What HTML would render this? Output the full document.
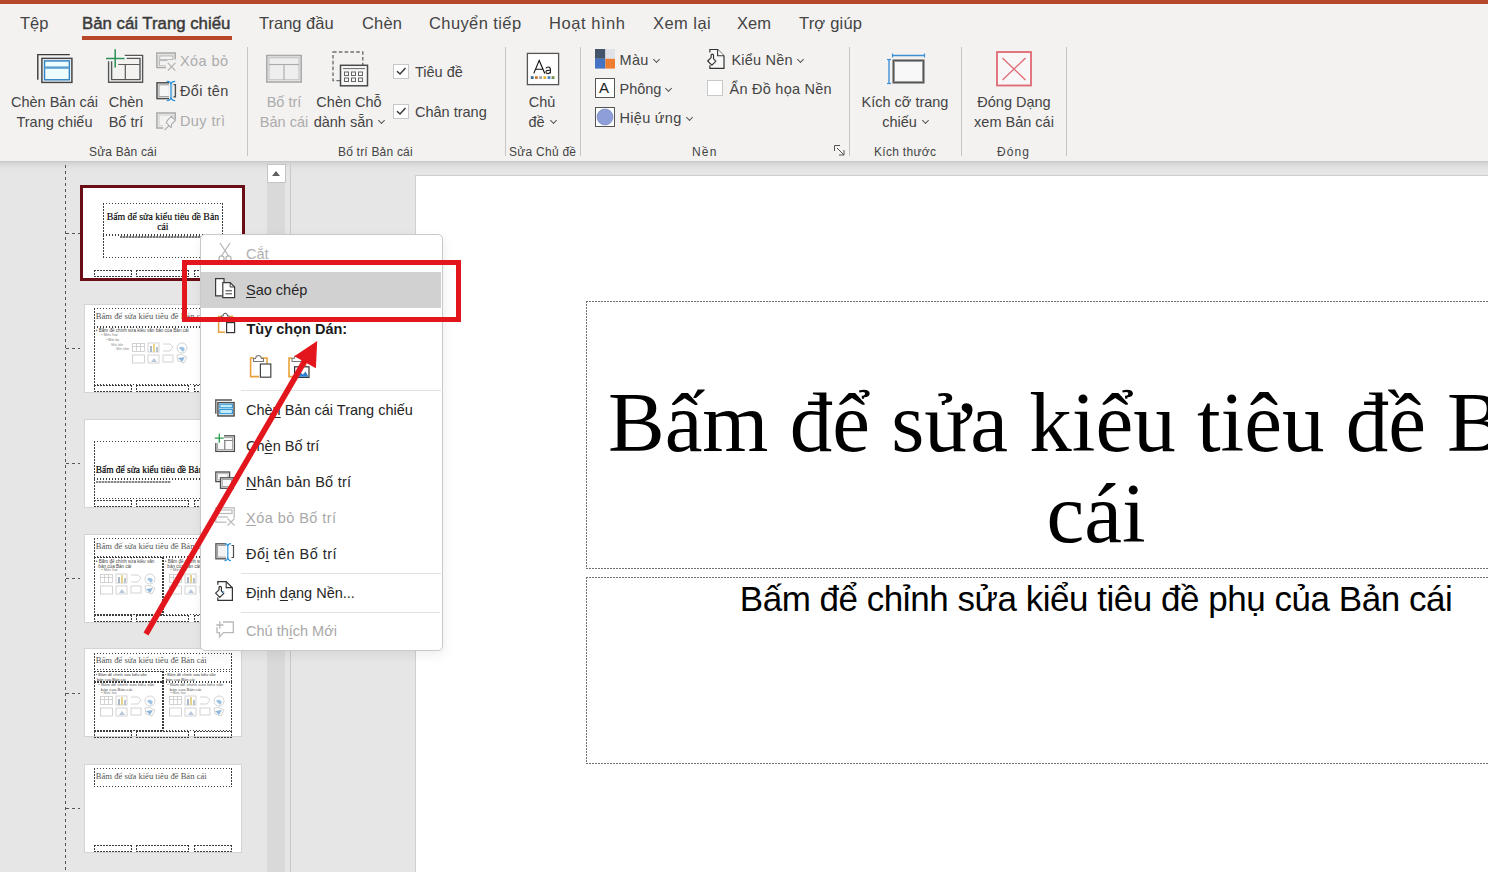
<!DOCTYPE html>
<html><head><meta charset="utf-8">
<style>
*{margin:0;padding:0;box-sizing:border-box}
html,body{width:1488px;height:872px;overflow:hidden;background:#e6e6e6;font-family:"Liberation Sans",sans-serif;color:#3b3a39}
.a{position:absolute}
.t{position:absolute;white-space:nowrap;line-height:1}
#topbar{left:0;top:0;width:1488px;height:4px;background:#b7472a}
#ribbon{left:0;top:4px;width:1488px;height:157px;background:#f3f2f1}
#rshadow{left:0;top:161px;width:1488px;height:12px;background:linear-gradient(#c4c4c4,#d6d6d6 2px,#e2e3e3 7px,#e6e6e6 12px)}
.tab{font-size:16.5px;color:#444;top:15px}
.sep{position:absolute;width:1px;background:#c8c6c4;top:47px;height:109px}
.lbl{font-size:14.5px;color:#444}
.dis{color:#acacac}
.glbl{font-size:12px;color:#444;top:146px;letter-spacing:0.15px}
.chev{display:inline-block;width:6px;height:6px;border-right:1.2px solid #555;border-bottom:1.2px solid #555;transform:rotate(45deg);}
</style></head>
<body>
<div id="topbar" class="a"></div>
<div id="ribbon" class="a"></div>
<div id="rshadow" class="a"></div>

<!-- tabs -->
<div class="t tab" style="left:20px">Tệp</div>
<div class="t tab" style="left:82px;top:16px;color:#3a3a3a;font-size:16.8px;-webkit-text-stroke:0.45px #3a3a3a">Bản cái Trang chiếu</div>
<div class="a" style="left:82px;top:36px;width:150px;height:4px;background:#b8472a"></div>
<div class="t tab" style="left:259px">Trang đầu</div>
<div class="t tab" style="left:362px;letter-spacing:0.15px">Chèn</div>
<div class="t tab" style="left:429px;letter-spacing:0.4px">Chuyển tiếp</div>
<div class="t tab" style="left:549px;letter-spacing:0.55px">Hoạt hình</div>
<div class="t tab" style="left:653px;letter-spacing:0.45px">Xem lại</div>
<div class="t tab" style="left:737px">Xem</div>
<div class="t tab" style="left:799px;letter-spacing:0.2px">Trợ giúp</div>

<!-- separators -->
<div class="sep" style="left:247px"></div>
<div class="sep" style="left:505px"></div>
<div class="sep" style="left:580px"></div>
<div class="sep" style="left:849px"></div>
<div class="sep" style="left:961px"></div>
<div class="sep" style="left:1066px"></div>

<!-- group labels -->
<div class="t glbl" style="left:89px">Sửa Bản cái</div>
<div class="t glbl" style="left:338px;letter-spacing:0.2px">Bố trí Bản cái</div>
<div class="t glbl" style="left:509px;letter-spacing:0.25px">Sửa Chủ đề</div>
<div class="t glbl" style="left:692px;letter-spacing:1.2px">Nền</div>
<div class="t glbl" style="left:874px;letter-spacing:0.3px">Kích thước</div>
<div class="t glbl" style="left:997px;letter-spacing:1.1px">Đóng</div>

<!-- ===== RIBBON CONTENT ===== -->
<!-- Group 1 -->
<svg class="a" style="left:30px;top:48px" width="50" height="40" viewBox="30 48 50 40">
  <path d="M37.8 79.8 V54.6 H69.8" fill="none" stroke="#3a3a3a" stroke-width="1.4"/>
  <rect x="41.9" y="58.4" width="30" height="24" fill="#fff" stroke="#444" stroke-width="1.5"/>
  <rect x="44.5" y="60.9" width="24.9" height="18.9" fill="#ecfcff" stroke="#3584c4" stroke-width="1.5"/>
  <rect x="44.5" y="66.4" width="24.9" height="2.4" fill="#5e9fd0"/>
</svg>
<div class="t lbl" style="left:0;width:109px;text-align:center;top:92.8px;line-height:19.8px">Chèn Bản cái<br>Trang chiếu</div>

<svg class="a" style="left:100px;top:45px" width="50" height="42" viewBox="100 45 50 42">
  <path d="M124.7 55.4 H142.6 V82.2 H108.6 V61.3 M111.6 61.3 V79.6 H140 V58.4 H126.6" fill="#fafafa" stroke="#555" stroke-width="1.4"/>
  <path d="M118.3 64.5 H140 M125.3 64.5 V79.6" fill="none" stroke="#5a5a5a" stroke-width="1.2"/>
  <path d="M106 58.4 H124.6 M115.2 49.2 V67.6" stroke="#2a9058" stroke-width="1.5"/>
</svg>
<div class="t lbl" style="left:96px;width:60px;text-align:center;top:92.8px;line-height:19.8px">Chèn<br>Bố trí</div>

<!-- small buttons -->
<svg class="a" style="left:154px;top:50px" width="24" height="84" viewBox="154 50 24 84">
  <!-- Xoa bo -->
  <path d="M175.2 59.6 V52.9 H156.9 V67.6 H166" fill="none" stroke="#a8a8a8" stroke-width="1.5"/>
  <path d="M173 59.6 V55 H159 V65.5 H166" fill="none" stroke="#cdcdcd" stroke-width="1"/>
  <rect x="159.8" y="56" width="13" height="3.4" fill="#f6f6f6" stroke="#b4b4b4" stroke-width="0.9"/>
  <path d="M159.5 60.6 H167.5 M159.5 60.6 V65.5" fill="none" stroke="#b4b4b4" stroke-width="0.9"/>
  <path d="M167.8 62.8 L175.4 70.6 M175.4 62.8 L167.8 70.6" stroke="#b0b0b0" stroke-width="1.2"/>
  <!-- Doi ten -->
  <rect x="157" y="82.8" width="14.4" height="15.8" fill="#f6f6f6" stroke="#4d4d4d" stroke-width="1.5"/>
  <rect x="159" y="84.8" width="10.4" height="11.8" fill="none" stroke="#9a9a9a" stroke-width="1"/>
  <rect x="169" y="81" width="3.5" height="20" fill="#f3f2f1"/>
  <path d="M173.6 84.6 H175.4 V96.8 H173.6" fill="none" stroke="#4d4d4d" stroke-width="1.4"/>
  <path d="M166.8 81.4 Q171 81.4 171 85 V96.8 Q171 100.6 166.8 100.6 M175.2 81.4 Q171 81.4 171 85 V96.8 Q171 100.6 175.2 100.6" fill="none" stroke="#2b93d6" stroke-width="1.3"/>
  <!-- Duy tri -->
  <path d="M175.2 119.6 V112.9 H156.9 V128 H163.3" fill="none" stroke="#a8a8a8" stroke-width="1.5"/>
  <path d="M173 117 V115 H159 V125.8 H163" fill="none" stroke="#cfcfcf" stroke-width="1.1"/>
  <path d="M164.5 130.2 L168.8 125.9 M166.2 122.6 L171.2 127.6 L171.6 124.2 L175.4 120.4 L171.4 116.4 L167.6 120.2 Z" fill="#f4f4f4" stroke="#ababab" stroke-width="1.1" stroke-linejoin="round"/>
</svg>
<div class="t lbl dis" style="left:180px;top:54.4px;letter-spacing:0.4px">Xóa bỏ</div>
<div class="t lbl" style="left:180px;top:84.3px;letter-spacing:0.4px">Đổi tên</div>
<div class="t lbl dis" style="left:180px;top:114.2px;letter-spacing:0.4px">Duy trì</div>

<!-- Group 2 -->
<svg class="a" style="left:262px;top:50px" width="44" height="36" viewBox="262 50 44 36">
  <rect x="266.8" y="55.5" width="34.4" height="26.5" fill="#eeeeee" stroke="#a9a9a9" stroke-width="1.6"/>
  <rect x="269" y="57.8" width="30" height="22" fill="none" stroke="#b8b8b8" stroke-width="0.9"/>
  <line x1="269" y1="64.5" x2="299" y2="64.5" stroke="#a9a9a9" stroke-width="1.1"/>
  <line x1="284" y1="64.5" x2="284" y2="80" stroke="#a9a9a9" stroke-width="1.1"/>
</svg>
<div class="t lbl dis" style="left:254px;width:60px;text-align:center;top:92.8px;line-height:19.8px">Bố trí<br>Bản cái</div>

<svg class="a" style="left:328px;top:48px" width="44" height="42" viewBox="328 48 44 42">
  <rect x="333" y="52" width="29.8" height="28.6" fill="none" stroke="#707070" stroke-width="1.4" stroke-dasharray="3.6 2.2"/>
  <rect x="340.5" y="65.3" width="27" height="20.5" fill="#f7f7f7" stroke="#4a4a4a" stroke-width="1.5"/>
  <line x1="343" y1="68.6" x2="365" y2="68.6" stroke="#666" stroke-width="1"/>
  <g fill="none" stroke="#666" stroke-width="1">
    <rect x="344.5" y="72" width="4" height="3.5"/><rect x="351.5" y="72" width="4" height="3.5"/><rect x="358.5" y="72" width="4" height="3.5"/>
    <rect x="344.5" y="78" width="4" height="3.5"/><rect x="351.5" y="78" width="4" height="3.5"/><rect x="358.5" y="78" width="4" height="3.5"/>
  </g>
</svg>
<div class="t lbl" style="left:313px;width:72px;text-align:center;top:92.8px;line-height:19.8px">Chèn Chỗ<br>dành sẵn <span class="chev" style="position:relative;top:-4px;left:0px;margin-left:2px;width:5px;height:5px"></span></div>

<div class="a" style="left:393px;top:63.5px;width:15.5px;height:15.5px;background:#fff;border:1px solid #c8c8c8"></div>
<svg class="a" style="left:393px;top:63px" width="16" height="16"><path d="M4 8.2 L7 11 L12.5 5" fill="none" stroke="#333" stroke-width="1.4"/></svg>
<div class="t lbl" style="left:415px;top:64.7px">Tiêu đề</div>
<div class="a" style="left:393px;top:103.5px;width:15.5px;height:15.5px;background:#fff;border:1px solid #c8c8c8"></div>
<svg class="a" style="left:393px;top:103px" width="16" height="16"><path d="M4 8.2 L7 11 L12.5 5" fill="none" stroke="#333" stroke-width="1.4"/></svg>
<div class="t lbl" style="left:415px;top:104.7px">Chân trang</div>

<!-- Group 3 -->
<svg class="a" style="left:526px;top:52px" width="34" height="34" viewBox="526 52 34 34">
  <rect x="527.4" y="53.4" width="31.2" height="31.2" fill="#fff" stroke="#555" stroke-width="1.3"/>
  <path d="M533.8 73.4 L539.2 60.4 L544.8 73.4 M535.6 69.2 H543" fill="none" stroke="#111" stroke-width="1.15"/>
  <path d="M550.4 73.4 V69.4 Q550.4 67 548.2 67 Q546.4 67 546 68.3 M550.4 70.3 Q546 70 545.9 72 Q546 73.6 547.8 73.6 Q549.8 73.6 550.4 71.6" fill="none" stroke="#111" stroke-width="1.05"/>
  <rect x="530.8" y="76.2" width="2.8" height="2.8" fill="#3a6c94"/>
  <rect x="535" y="76.2" width="2.8" height="2.8" fill="#c47a32"/>
  <rect x="539.2" y="76.2" width="2.8" height="2.8" fill="#a3a3a3"/>
  <rect x="543.4" y="76.2" width="2.8" height="2.8" fill="#e2b232"/>
  <rect x="547.6" y="76.2" width="2.8" height="2.8" fill="#4f82c8"/>
  <rect x="551.6" y="76.2" width="2.8" height="2.8" fill="#6f8f4f"/>
</svg>
<div class="t lbl" style="left:512px;width:60px;text-align:center;top:92.8px;line-height:19.8px">Chủ<br>đề <span class="chev" style="position:relative;top:-4px;left:0px;margin-left:2px;width:5px;height:5px"></span></div>

<!-- Group 4 -->
<svg class="a" style="left:594px;top:48px" width="24" height="80" viewBox="594 48 24 80">
  <rect x="595" y="49" width="10.4" height="9.8" fill="#44546a"/>
  <rect x="605.4" y="49" width="9.6" height="9.8" fill="#dfe3e8"/>
  <rect x="595" y="58.8" width="10.4" height="9.8" fill="#4472c4"/>
  <rect x="605.4" y="58.8" width="9.6" height="9.8" fill="#ed7d31"/>
  <rect x="595.5" y="78.5" width="19" height="19" fill="#fff" stroke="#555" stroke-width="1"/>
  <rect x="595.5" y="107.5" width="19" height="19" fill="#fff" stroke="#555" stroke-width="1"/>
  <circle cx="605" cy="117" r="8" fill="#8e9fd8" stroke="#6f80c0" stroke-width="0.6"/>
</svg>
<div class="t" style="left:599px;top:80px;font-size:15px;color:#222">A</div>
<div class="t lbl" style="left:619.5px;top:52.7px;letter-spacing:0.3px">Màu <span class="chev" style="position:relative;top:-3px;left:1px;width:5px;height:5px"></span></div>
<div class="t lbl" style="left:619.5px;top:82.3px">Phông <span class="chev" style="position:relative;top:-3px;left:1px;width:5px;height:5px"></span></div>
<div class="t lbl" style="left:619.5px;top:110.5px;letter-spacing:0.3px">Hiệu ứng <span class="chev" style="position:relative;top:-3px;left:1px;width:5px;height:5px"></span></div>

<svg class="a" style="left:704px;top:46px" width="24" height="26" viewBox="704 46 24 26">
  <path d="M709.9 52.6 V49.5 H717.6 L724 55.9 V68.4 H709.9 V65.2" fill="#f7f7f7" stroke="#333" stroke-width="1.2"/>
  <path d="M717.6 49.5 V55.7 H724" fill="#fff" stroke="#333" stroke-width="1.1"/>
  <path d="M711.1 55.2 Q711.1 54.2 712.3 54.2 Q713.5 54.2 713.5 55.2 V58.8 L715.9 61.2 L711.9 65.2 L707.7 61 L711.1 57.6 Z" fill="#fff" stroke="#333" stroke-width="1.2" stroke-linejoin="round"/>
  <path d="M715 58.5 V64" stroke="#9ab" stroke-width="0.8" opacity="0.6"/>
</svg>
<div class="t lbl" style="left:731.5px;top:52.7px;letter-spacing:0.2px">Kiểu Nền <span class="chev" style="position:relative;top:-3px;left:1px;width:5px;height:5px"></span></div>
<div class="a" style="left:707px;top:80px;width:16px;height:16px;background:#fff;border:1px solid #c8c8c8"></div>
<div class="t lbl" style="left:729.5px;top:82.3px;letter-spacing:0.25px">Ẩn Đồ họa Nền</div>
<svg class="a" style="left:834px;top:145px" width="12" height="12"><path d="M0.5 0.5 H6 M0.5 0.5 V6 M3 3 L10 10 M10 5 V10 H5" fill="none" stroke="#555" stroke-width="1"/></svg>

<!-- Group 5 -->
<svg class="a" style="left:884px;top:50px" width="46" height="38" viewBox="884 50 46 38">
  <line x1="889" y1="59" x2="889" y2="84" stroke="#3c8fd4" stroke-width="1.4"/>
  <line x1="887" y1="59.5" x2="891" y2="59.5" stroke="#3c8fd4" stroke-width="1.2"/>
  <line x1="887" y1="83.5" x2="891" y2="83.5" stroke="#3c8fd4" stroke-width="1.2"/>
  <line x1="892" y1="55.5" x2="925" y2="55.5" stroke="#3c8fd4" stroke-width="1.4"/>
  <line x1="892.5" y1="53.5" x2="892.5" y2="57.5" stroke="#3c8fd4" stroke-width="1.2"/>
  <line x1="924.5" y1="53.5" x2="924.5" y2="57.5" stroke="#3c8fd4" stroke-width="1.2"/>
  <rect x="892.5" y="59.5" width="32" height="24" fill="#555"/>
  <rect x="894.5" y="61.5" width="28" height="20" fill="#f8f8f8" stroke="#999" stroke-width="1"/>
</svg>
<div class="t lbl" style="left:855px;width:100px;text-align:center;top:92.8px;line-height:19.8px">Kích cỡ trang<br>chiếu <span class="chev" style="position:relative;top:-4px;left:0px;margin-left:2px;width:5px;height:5px"></span></div>

<!-- Group 6 -->
<svg class="a" style="left:994px;top:49px" width="40" height="40" viewBox="994 49 40 40">
  <rect x="997" y="52" width="34" height="33.5" fill="#f8f6f6" stroke="#e06a74" stroke-width="1.8"/>
  <path d="M1002.5 58 L1025.5 80 M1025.5 58 L1002.5 80" stroke="#e06a74" stroke-width="1.3"/>
</svg>
<div class="t lbl" style="left:964px;width:100px;text-align:center;top:92.8px;line-height:19.8px">Đóng Dạng<br>xem Bản cái</div>

<!-- left pane -->
<div class="a" style="left:65px;top:165px;width:1px;height:707px;background:repeating-linear-gradient(180deg,#555 0 3px,transparent 3px 6px)"></div>
<div class="a" style="left:66px;top:232.5px;width:14px;height:1px;background:repeating-linear-gradient(90deg,#555 0 3px,transparent 3px 6px)"></div>
<div class="a" style="left:80.2px;top:185.2px;width:164.7px;height:95.4px;border:3px solid #6b0d17;background:#fff"></div>
<div class="a" style="left:103.4px;top:203.3px;width:119.3px;height:31.5px;background:repeating-linear-gradient(90deg,#3c3c3c 0 1.8px,transparent 1.8px 3px) top/100% 1px no-repeat,repeating-linear-gradient(90deg,#3c3c3c 0 1.8px,transparent 1.8px 3px) bottom/100% 1px no-repeat,repeating-linear-gradient(180deg,#3c3c3c 0 1.8px,transparent 1.8px 3px) left/1px 100% no-repeat,repeating-linear-gradient(180deg,#3c3c3c 0 1.8px,transparent 1.8px 3px) right/1px 100% no-repeat;"></div>
<div class="a" style="left:103.4px;top:234.8px;width:119.3px;height:23.5px;background:repeating-linear-gradient(90deg,#3c3c3c 0 1.8px,transparent 1.8px 3px) top/100% 1px no-repeat,repeating-linear-gradient(90deg,#3c3c3c 0 1.8px,transparent 1.8px 3px) bottom/100% 1px no-repeat,repeating-linear-gradient(180deg,#3c3c3c 0 1.8px,transparent 1.8px 3px) left/1px 100% no-repeat,repeating-linear-gradient(180deg,#3c3c3c 0 1.8px,transparent 1.8px 3px) right/1px 100% no-repeat;"></div>
<div class="t" style="left:103.4px;top:211.5px;width:119px;text-align:center;font-family:'Liberation Serif',serif;font-size:9.8px;line-height:10.2px;color:#000;-webkit-text-stroke:0.15px #000;white-space:normal">Bấm để sửa kiểu tiêu đề Bản cái</div>
<div class="a" style="left:120px;top:236px;width:85px;height:2px;background:repeating-linear-gradient(90deg,#777 0 2px,#bbb 2px 3px)"></div>
<div class="a" style="left:94.3px;top:270px;width:37.5px;height:7px;background:repeating-linear-gradient(90deg,#3c3c3c 0 1.8px,transparent 1.8px 3px) top/100% 1px no-repeat,repeating-linear-gradient(90deg,#3c3c3c 0 1.8px,transparent 1.8px 3px) bottom/100% 1px no-repeat,repeating-linear-gradient(180deg,#3c3c3c 0 1.8px,transparent 1.8px 3px) left/1px 100% no-repeat,repeating-linear-gradient(180deg,#3c3c3c 0 1.8px,transparent 1.8px 3px) right/1px 100% no-repeat;"></div>
<div class="a" style="left:136.2px;top:270px;width:53px;height:7px;background:repeating-linear-gradient(90deg,#3c3c3c 0 1.8px,transparent 1.8px 3px) top/100% 1px no-repeat,repeating-linear-gradient(90deg,#3c3c3c 0 1.8px,transparent 1.8px 3px) bottom/100% 1px no-repeat,repeating-linear-gradient(180deg,#3c3c3c 0 1.8px,transparent 1.8px 3px) left/1px 100% no-repeat,repeating-linear-gradient(180deg,#3c3c3c 0 1.8px,transparent 1.8px 3px) right/1px 100% no-repeat;"></div>
<div class="a" style="left:194.2px;top:270px;width:37.5px;height:7px;background:repeating-linear-gradient(90deg,#3c3c3c 0 1.8px,transparent 1.8px 3px) top/100% 1px no-repeat,repeating-linear-gradient(90deg,#3c3c3c 0 1.8px,transparent 1.8px 3px) bottom/100% 1px no-repeat,repeating-linear-gradient(180deg,#3c3c3c 0 1.8px,transparent 1.8px 3px) left/1px 100% no-repeat,repeating-linear-gradient(180deg,#3c3c3c 0 1.8px,transparent 1.8px 3px) right/1px 100% no-repeat;"></div>
<div class="a" style="left:66px;top:348.0px;width:14px;height:1px;background:repeating-linear-gradient(90deg,#555 0 3px,transparent 3px 6px)"></div>
<div class="a" style="left:83.5px;top:303.5px;width:158px;height:89px;background:#fff;border:1px solid #d4d4d4"></div>
<div class="a" style="left:94.3px;top:308.0px;width:137.3px;height:19.2px;background:repeating-linear-gradient(90deg,#3c3c3c 0 1.8px,transparent 1.8px 3px) top/100% 1px no-repeat,repeating-linear-gradient(90deg,#3c3c3c 0 1.8px,transparent 1.8px 3px) bottom/100% 1px no-repeat,repeating-linear-gradient(180deg,#3c3c3c 0 1.8px,transparent 1.8px 3px) left/1px 100% no-repeat,repeating-linear-gradient(180deg,#3c3c3c 0 1.8px,transparent 1.8px 3px) right/1px 100% no-repeat;"></div>
<div class="a" style="left:94.3px;top:327.2px;width:137.3px;height:58px;background:repeating-linear-gradient(90deg,#3c3c3c 0 1.8px,transparent 1.8px 3px) top/100% 1px no-repeat,repeating-linear-gradient(90deg,#3c3c3c 0 1.8px,transparent 1.8px 3px) bottom/100% 1px no-repeat,repeating-linear-gradient(180deg,#3c3c3c 0 1.8px,transparent 1.8px 3px) left/1px 100% no-repeat,repeating-linear-gradient(180deg,#3c3c3c 0 1.8px,transparent 1.8px 3px) right/1px 100% no-repeat;"></div>
<div class="t" style="left:95.8px;top:312.0px;font-family:'Liberation Serif',serif;font-size:8.6px;color:#555">Bấm để sửa kiểu tiêu đề Bản cái</div>
<div class="t" style="left:95.8px;top:328.5px;font-size:4.6px;color:#444">• Bấm để chỉnh sửa kiểu văn bản của Bản cái</div>
<div class="t" style="left:101.3px;top:334.0px;font-size:3.8px;color:#777">• Mức hai</div>
<div class="t" style="left:106.3px;top:339.0px;font-size:3.2px;color:#777">• Mức ba</div>
<div class="t" style="left:111.3px;top:343.5px;font-size:3px;color:#888">Mức bốn</div>
<div class="t" style="left:116.3px;top:347.5px;font-size:3px;color:#888">Mức năm</div>
<svg class="a" style="left:132.3px;top:341.5px" width="56" height="22" viewBox="0 0 56 22"><g fill="none" stroke="#c9c9c9" stroke-width="0.8"><rect x="0.5" y="1.5" width="12" height="8"/><path d="M0.5 4.5H12.5M4.5 1.5V9.5M8.5 1.5V9.5"/><rect x="16" y="1" width="11" height="9"/><path d="M31 2 L38 2 L41 5 L38 9 L31 9"/><circle cx="50" cy="6" r="5"/><rect x="0.5" y="13" width="12" height="8"/><rect x="16" y="13" width="11" height="8"/><rect x="31" y="13" width="10" height="7"/><path d="M45 13 Q50 11 55 15 L52 21 L46 19 Z"/></g><rect x="18" y="4" width="2" height="6" fill="#aab8c8"/><rect x="21" y="2" width="2" height="8" fill="#e6d48a"/><rect x="24" y="5" width="2" height="5" fill="#b8c4d0"/><path d="M47 6 Q50 3 53 7 L51 10 Z" fill="#9cc2e4"/><path d="M46 16 L53 15 L50 20 Z" fill="#8fb8dc"/><path d="M19 20 L22 16 L25 20Z" fill="#b8c8dc"/></svg>
<div class="a" style="left:94.3px;top:385.2px;width:37.5px;height:7px;background:repeating-linear-gradient(90deg,#3c3c3c 0 1.8px,transparent 1.8px 3px) top/100% 1px no-repeat,repeating-linear-gradient(90deg,#3c3c3c 0 1.8px,transparent 1.8px 3px) bottom/100% 1px no-repeat,repeating-linear-gradient(180deg,#3c3c3c 0 1.8px,transparent 1.8px 3px) left/1px 100% no-repeat,repeating-linear-gradient(180deg,#3c3c3c 0 1.8px,transparent 1.8px 3px) right/1px 100% no-repeat;"></div>
<div class="a" style="left:136.2px;top:385.2px;width:53px;height:7px;background:repeating-linear-gradient(90deg,#3c3c3c 0 1.8px,transparent 1.8px 3px) top/100% 1px no-repeat,repeating-linear-gradient(90deg,#3c3c3c 0 1.8px,transparent 1.8px 3px) bottom/100% 1px no-repeat,repeating-linear-gradient(180deg,#3c3c3c 0 1.8px,transparent 1.8px 3px) left/1px 100% no-repeat,repeating-linear-gradient(180deg,#3c3c3c 0 1.8px,transparent 1.8px 3px) right/1px 100% no-repeat;"></div>
<div class="a" style="left:194.2px;top:385.2px;width:37.5px;height:7px;background:repeating-linear-gradient(90deg,#3c3c3c 0 1.8px,transparent 1.8px 3px) top/100% 1px no-repeat,repeating-linear-gradient(90deg,#3c3c3c 0 1.8px,transparent 1.8px 3px) bottom/100% 1px no-repeat,repeating-linear-gradient(180deg,#3c3c3c 0 1.8px,transparent 1.8px 3px) left/1px 100% no-repeat,repeating-linear-gradient(180deg,#3c3c3c 0 1.8px,transparent 1.8px 3px) right/1px 100% no-repeat;"></div>
<div class="a" style="left:66px;top:463.0px;width:14px;height:1px;background:repeating-linear-gradient(90deg,#555 0 3px,transparent 3px 6px)"></div>
<div class="a" style="left:83.5px;top:418.5px;width:158px;height:89px;background:#fff;border:1px solid #d4d4d4"></div>
<div class="a" style="left:94.3px;top:440.6px;width:137.3px;height:38.1px;background:repeating-linear-gradient(90deg,#3c3c3c 0 1.8px,transparent 1.8px 3px) top/100% 1px no-repeat,repeating-linear-gradient(90deg,#3c3c3c 0 1.8px,transparent 1.8px 3px) bottom/100% 1px no-repeat,repeating-linear-gradient(180deg,#3c3c3c 0 1.8px,transparent 1.8px 3px) left/1px 100% no-repeat,repeating-linear-gradient(180deg,#3c3c3c 0 1.8px,transparent 1.8px 3px) right/1px 100% no-repeat;"></div>
<div class="a" style="left:94.3px;top:478.7px;width:137.3px;height:20.8px;background:repeating-linear-gradient(90deg,#3c3c3c 0 1.8px,transparent 1.8px 3px) top/100% 1px no-repeat,repeating-linear-gradient(90deg,#3c3c3c 0 1.8px,transparent 1.8px 3px) bottom/100% 1px no-repeat,repeating-linear-gradient(180deg,#3c3c3c 0 1.8px,transparent 1.8px 3px) left/1px 100% no-repeat,repeating-linear-gradient(180deg,#3c3c3c 0 1.8px,transparent 1.8px 3px) right/1px 100% no-repeat;"></div>
<div class="t" style="left:95.8px;top:466.0px;font-family:'Liberation Serif',serif;font-size:9.4px;color:#000;-webkit-text-stroke:0.2px #000">Bấm để sửa kiểu tiêu đề Bản cái</div>
<div class="a" style="left:96.3px;top:480.5px;width:75px;height:2px;background:repeating-linear-gradient(90deg,#888 0 2px,#ccc 2px 3px)"></div>
<div class="a" style="left:94.3px;top:499.5px;width:37.5px;height:7px;background:repeating-linear-gradient(90deg,#3c3c3c 0 1.8px,transparent 1.8px 3px) top/100% 1px no-repeat,repeating-linear-gradient(90deg,#3c3c3c 0 1.8px,transparent 1.8px 3px) bottom/100% 1px no-repeat,repeating-linear-gradient(180deg,#3c3c3c 0 1.8px,transparent 1.8px 3px) left/1px 100% no-repeat,repeating-linear-gradient(180deg,#3c3c3c 0 1.8px,transparent 1.8px 3px) right/1px 100% no-repeat;"></div>
<div class="a" style="left:136.2px;top:499.5px;width:53px;height:7px;background:repeating-linear-gradient(90deg,#3c3c3c 0 1.8px,transparent 1.8px 3px) top/100% 1px no-repeat,repeating-linear-gradient(90deg,#3c3c3c 0 1.8px,transparent 1.8px 3px) bottom/100% 1px no-repeat,repeating-linear-gradient(180deg,#3c3c3c 0 1.8px,transparent 1.8px 3px) left/1px 100% no-repeat,repeating-linear-gradient(180deg,#3c3c3c 0 1.8px,transparent 1.8px 3px) right/1px 100% no-repeat;"></div>
<div class="a" style="left:194.2px;top:499.5px;width:37.5px;height:7px;background:repeating-linear-gradient(90deg,#3c3c3c 0 1.8px,transparent 1.8px 3px) top/100% 1px no-repeat,repeating-linear-gradient(90deg,#3c3c3c 0 1.8px,transparent 1.8px 3px) bottom/100% 1px no-repeat,repeating-linear-gradient(180deg,#3c3c3c 0 1.8px,transparent 1.8px 3px) left/1px 100% no-repeat,repeating-linear-gradient(180deg,#3c3c3c 0 1.8px,transparent 1.8px 3px) right/1px 100% no-repeat;"></div>
<div class="a" style="left:66px;top:578.1px;width:14px;height:1px;background:repeating-linear-gradient(90deg,#555 0 3px,transparent 3px 6px)"></div>
<div class="a" style="left:83.5px;top:533.6px;width:158px;height:89px;background:#fff;border:1px solid #d4d4d4"></div>
<div class="a" style="left:94.3px;top:538.1px;width:137.3px;height:19.2px;background:repeating-linear-gradient(90deg,#3c3c3c 0 1.8px,transparent 1.8px 3px) top/100% 1px no-repeat,repeating-linear-gradient(90deg,#3c3c3c 0 1.8px,transparent 1.8px 3px) bottom/100% 1px no-repeat,repeating-linear-gradient(180deg,#3c3c3c 0 1.8px,transparent 1.8px 3px) left/1px 100% no-repeat,repeating-linear-gradient(180deg,#3c3c3c 0 1.8px,transparent 1.8px 3px) right/1px 100% no-repeat;"></div>
<div class="a" style="left:94.3px;top:557.3000000000001px;width:69px;height:58px;background:repeating-linear-gradient(90deg,#3c3c3c 0 1.8px,transparent 1.8px 3px) top/100% 1px no-repeat,repeating-linear-gradient(90deg,#3c3c3c 0 1.8px,transparent 1.8px 3px) bottom/100% 1px no-repeat,repeating-linear-gradient(180deg,#3c3c3c 0 1.8px,transparent 1.8px 3px) left/1px 100% no-repeat,repeating-linear-gradient(180deg,#3c3c3c 0 1.8px,transparent 1.8px 3px) right/1px 100% no-repeat;"></div>
<div class="a" style="left:163.3px;top:557.3000000000001px;width:68.3px;height:58px;background:repeating-linear-gradient(90deg,#3c3c3c 0 1.8px,transparent 1.8px 3px) top/100% 1px no-repeat,repeating-linear-gradient(90deg,#3c3c3c 0 1.8px,transparent 1.8px 3px) bottom/100% 1px no-repeat,repeating-linear-gradient(180deg,#3c3c3c 0 1.8px,transparent 1.8px 3px) left/1px 100% no-repeat,repeating-linear-gradient(180deg,#3c3c3c 0 1.8px,transparent 1.8px 3px) right/1px 100% no-repeat;"></div>
<div class="t" style="left:95.8px;top:542.1px;font-family:'Liberation Serif',serif;font-size:8.6px;color:#555">Bấm để sửa kiểu tiêu đề Bản cái</div>
<div class="t" style="left:95.8px;top:558.6px;font-size:4.6px;line-height:5px;color:#444">• Bấm để chỉnh sửa kiểu văn<br>&nbsp; bản của Bản cái</div>
<div class="t" style="left:101.3px;top:568.6px;font-size:3.8px;color:#777">• Mức hai</div>
<svg class="a" style="left:100.3px;top:572.6px" width="56" height="22" viewBox="0 0 56 22"><g fill="none" stroke="#c9c9c9" stroke-width="0.8"><rect x="0.5" y="1.5" width="12" height="8"/><path d="M0.5 4.5H12.5M4.5 1.5V9.5M8.5 1.5V9.5"/><rect x="16" y="1" width="11" height="9"/><path d="M31 2 L38 2 L41 5 L38 9 L31 9"/><circle cx="50" cy="6" r="5"/><rect x="0.5" y="13" width="12" height="8"/><rect x="16" y="13" width="11" height="8"/><rect x="31" y="13" width="10" height="7"/><path d="M45 13 Q50 11 55 15 L52 21 L46 19 Z"/></g><rect x="18" y="4" width="2" height="6" fill="#aab8c8"/><rect x="21" y="2" width="2" height="8" fill="#e6d48a"/><rect x="24" y="5" width="2" height="5" fill="#b8c4d0"/><path d="M47 6 Q50 3 53 7 L51 10 Z" fill="#9cc2e4"/><path d="M46 16 L53 15 L50 20 Z" fill="#8fb8dc"/><path d="M19 20 L22 16 L25 20Z" fill="#b8c8dc"/></svg>
<div class="t" style="left:164.8px;top:558.6px;font-size:4.6px;line-height:5px;color:#444">• Bấm để chỉnh sửa kiểu văn<br>&nbsp; bản của Bản cái</div>
<div class="t" style="left:170.3px;top:568.6px;font-size:3.8px;color:#777">• Mức hai</div>
<svg class="a" style="left:169.3px;top:572.6px" width="56" height="22" viewBox="0 0 56 22"><g fill="none" stroke="#c9c9c9" stroke-width="0.8"><rect x="0.5" y="1.5" width="12" height="8"/><path d="M0.5 4.5H12.5M4.5 1.5V9.5M8.5 1.5V9.5"/><rect x="16" y="1" width="11" height="9"/><path d="M31 2 L38 2 L41 5 L38 9 L31 9"/><circle cx="50" cy="6" r="5"/><rect x="0.5" y="13" width="12" height="8"/><rect x="16" y="13" width="11" height="8"/><rect x="31" y="13" width="10" height="7"/><path d="M45 13 Q50 11 55 15 L52 21 L46 19 Z"/></g><rect x="18" y="4" width="2" height="6" fill="#aab8c8"/><rect x="21" y="2" width="2" height="8" fill="#e6d48a"/><rect x="24" y="5" width="2" height="5" fill="#b8c4d0"/><path d="M47 6 Q50 3 53 7 L51 10 Z" fill="#9cc2e4"/><path d="M46 16 L53 15 L50 20 Z" fill="#8fb8dc"/><path d="M19 20 L22 16 L25 20Z" fill="#b8c8dc"/></svg>
<div class="a" style="left:94.3px;top:615.3000000000001px;width:37.5px;height:7px;background:repeating-linear-gradient(90deg,#3c3c3c 0 1.8px,transparent 1.8px 3px) top/100% 1px no-repeat,repeating-linear-gradient(90deg,#3c3c3c 0 1.8px,transparent 1.8px 3px) bottom/100% 1px no-repeat,repeating-linear-gradient(180deg,#3c3c3c 0 1.8px,transparent 1.8px 3px) left/1px 100% no-repeat,repeating-linear-gradient(180deg,#3c3c3c 0 1.8px,transparent 1.8px 3px) right/1px 100% no-repeat;"></div>
<div class="a" style="left:136.2px;top:615.3000000000001px;width:53px;height:7px;background:repeating-linear-gradient(90deg,#3c3c3c 0 1.8px,transparent 1.8px 3px) top/100% 1px no-repeat,repeating-linear-gradient(90deg,#3c3c3c 0 1.8px,transparent 1.8px 3px) bottom/100% 1px no-repeat,repeating-linear-gradient(180deg,#3c3c3c 0 1.8px,transparent 1.8px 3px) left/1px 100% no-repeat,repeating-linear-gradient(180deg,#3c3c3c 0 1.8px,transparent 1.8px 3px) right/1px 100% no-repeat;"></div>
<div class="a" style="left:194.2px;top:615.3000000000001px;width:37.5px;height:7px;background:repeating-linear-gradient(90deg,#3c3c3c 0 1.8px,transparent 1.8px 3px) top/100% 1px no-repeat,repeating-linear-gradient(90deg,#3c3c3c 0 1.8px,transparent 1.8px 3px) bottom/100% 1px no-repeat,repeating-linear-gradient(180deg,#3c3c3c 0 1.8px,transparent 1.8px 3px) left/1px 100% no-repeat,repeating-linear-gradient(180deg,#3c3c3c 0 1.8px,transparent 1.8px 3px) right/1px 100% no-repeat;"></div>
<div class="a" style="left:66px;top:692.9px;width:14px;height:1px;background:repeating-linear-gradient(90deg,#555 0 3px,transparent 3px 6px)"></div>
<div class="a" style="left:83.5px;top:648.4px;width:158px;height:89px;background:#fff;border:1px solid #d4d4d4"></div>
<div class="a" style="left:94.3px;top:653.3px;width:137.3px;height:17.2px;background:repeating-linear-gradient(90deg,#3c3c3c 0 1.8px,transparent 1.8px 3px) top/100% 1px no-repeat,repeating-linear-gradient(90deg,#3c3c3c 0 1.8px,transparent 1.8px 3px) bottom/100% 1px no-repeat,repeating-linear-gradient(180deg,#3c3c3c 0 1.8px,transparent 1.8px 3px) left/1px 100% no-repeat,repeating-linear-gradient(180deg,#3c3c3c 0 1.8px,transparent 1.8px 3px) right/1px 100% no-repeat;"></div>
<div class="a" style="left:94.3px;top:670.5px;width:69px;height:11.5px;background:repeating-linear-gradient(90deg,#3c3c3c 0 1.8px,transparent 1.8px 3px) top/100% 1px no-repeat,repeating-linear-gradient(90deg,#3c3c3c 0 1.8px,transparent 1.8px 3px) bottom/100% 1px no-repeat,repeating-linear-gradient(180deg,#3c3c3c 0 1.8px,transparent 1.8px 3px) left/1px 100% no-repeat,repeating-linear-gradient(180deg,#3c3c3c 0 1.8px,transparent 1.8px 3px) right/1px 100% no-repeat;"></div>
<div class="a" style="left:163.3px;top:670.5px;width:68.3px;height:11.5px;background:repeating-linear-gradient(90deg,#3c3c3c 0 1.8px,transparent 1.8px 3px) top/100% 1px no-repeat,repeating-linear-gradient(90deg,#3c3c3c 0 1.8px,transparent 1.8px 3px) bottom/100% 1px no-repeat,repeating-linear-gradient(180deg,#3c3c3c 0 1.8px,transparent 1.8px 3px) left/1px 100% no-repeat,repeating-linear-gradient(180deg,#3c3c3c 0 1.8px,transparent 1.8px 3px) right/1px 100% no-repeat;"></div>
<div class="a" style="left:94.3px;top:682.0px;width:69px;height:48.5px;background:repeating-linear-gradient(90deg,#3c3c3c 0 1.8px,transparent 1.8px 3px) top/100% 1px no-repeat,repeating-linear-gradient(90deg,#3c3c3c 0 1.8px,transparent 1.8px 3px) bottom/100% 1px no-repeat,repeating-linear-gradient(180deg,#3c3c3c 0 1.8px,transparent 1.8px 3px) left/1px 100% no-repeat,repeating-linear-gradient(180deg,#3c3c3c 0 1.8px,transparent 1.8px 3px) right/1px 100% no-repeat;"></div>
<div class="a" style="left:163.3px;top:682.0px;width:68.3px;height:48.5px;background:repeating-linear-gradient(90deg,#3c3c3c 0 1.8px,transparent 1.8px 3px) top/100% 1px no-repeat,repeating-linear-gradient(90deg,#3c3c3c 0 1.8px,transparent 1.8px 3px) bottom/100% 1px no-repeat,repeating-linear-gradient(180deg,#3c3c3c 0 1.8px,transparent 1.8px 3px) left/1px 100% no-repeat,repeating-linear-gradient(180deg,#3c3c3c 0 1.8px,transparent 1.8px 3px) right/1px 100% no-repeat;"></div>
<div class="t" style="left:95.8px;top:656.4px;font-family:'Liberation Serif',serif;font-size:8.6px;color:#555">Bấm để sửa kiểu tiêu đề Bản cái</div>
<div class="t" style="left:95.8px;top:671.9px;font-size:4px;line-height:5px;color:#333">• Bấm để chỉnh sửa kiểu văn<br>&nbsp;bản của Bản cái</div>
<div class="t" style="left:98.3px;top:683.4px;font-size:4.4px;line-height:4.5px;color:#555">• Bấm để chỉnh sửa kiểu văn<br>&nbsp; bản của Bản cái</div>
<div class="t" style="left:101.3px;top:691.9px;font-size:3.6px;color:#777">• Mức hai</div>
<svg class="a" style="left:100.3px;top:695.4px" width="56" height="22" viewBox="0 0 56 22"><g fill="none" stroke="#c9c9c9" stroke-width="0.8"><rect x="0.5" y="1.5" width="12" height="8"/><path d="M0.5 4.5H12.5M4.5 1.5V9.5M8.5 1.5V9.5"/><rect x="16" y="1" width="11" height="9"/><path d="M31 2 L38 2 L41 5 L38 9 L31 9"/><circle cx="50" cy="6" r="5"/><rect x="0.5" y="13" width="12" height="8"/><rect x="16" y="13" width="11" height="8"/><rect x="31" y="13" width="10" height="7"/><path d="M45 13 Q50 11 55 15 L52 21 L46 19 Z"/></g><rect x="18" y="4" width="2" height="6" fill="#aab8c8"/><rect x="21" y="2" width="2" height="8" fill="#e6d48a"/><rect x="24" y="5" width="2" height="5" fill="#b8c4d0"/><path d="M47 6 Q50 3 53 7 L51 10 Z" fill="#9cc2e4"/><path d="M46 16 L53 15 L50 20 Z" fill="#8fb8dc"/><path d="M19 20 L22 16 L25 20Z" fill="#b8c8dc"/></svg>
<div class="t" style="left:164.8px;top:671.9px;font-size:4px;line-height:5px;color:#333">• Bấm để chỉnh sửa kiểu văn<br>&nbsp;bản của Bản cái</div>
<div class="t" style="left:167.3px;top:683.4px;font-size:4.4px;line-height:4.5px;color:#555">• Bấm để chỉnh sửa kiểu văn<br>&nbsp; bản của Bản cái</div>
<div class="t" style="left:170.3px;top:691.9px;font-size:3.6px;color:#777">• Mức hai</div>
<svg class="a" style="left:169.3px;top:695.4px" width="56" height="22" viewBox="0 0 56 22"><g fill="none" stroke="#c9c9c9" stroke-width="0.8"><rect x="0.5" y="1.5" width="12" height="8"/><path d="M0.5 4.5H12.5M4.5 1.5V9.5M8.5 1.5V9.5"/><rect x="16" y="1" width="11" height="9"/><path d="M31 2 L38 2 L41 5 L38 9 L31 9"/><circle cx="50" cy="6" r="5"/><rect x="0.5" y="13" width="12" height="8"/><rect x="16" y="13" width="11" height="8"/><rect x="31" y="13" width="10" height="7"/><path d="M45 13 Q50 11 55 15 L52 21 L46 19 Z"/></g><rect x="18" y="4" width="2" height="6" fill="#aab8c8"/><rect x="21" y="2" width="2" height="8" fill="#e6d48a"/><rect x="24" y="5" width="2" height="5" fill="#b8c4d0"/><path d="M47 6 Q50 3 53 7 L51 10 Z" fill="#9cc2e4"/><path d="M46 16 L53 15 L50 20 Z" fill="#8fb8dc"/><path d="M19 20 L22 16 L25 20Z" fill="#b8c8dc"/></svg>
<div class="a" style="left:94.3px;top:730.5px;width:37.5px;height:7px;background:repeating-linear-gradient(90deg,#3c3c3c 0 1.8px,transparent 1.8px 3px) top/100% 1px no-repeat,repeating-linear-gradient(90deg,#3c3c3c 0 1.8px,transparent 1.8px 3px) bottom/100% 1px no-repeat,repeating-linear-gradient(180deg,#3c3c3c 0 1.8px,transparent 1.8px 3px) left/1px 100% no-repeat,repeating-linear-gradient(180deg,#3c3c3c 0 1.8px,transparent 1.8px 3px) right/1px 100% no-repeat;"></div>
<div class="a" style="left:136.2px;top:730.5px;width:53px;height:7px;background:repeating-linear-gradient(90deg,#3c3c3c 0 1.8px,transparent 1.8px 3px) top/100% 1px no-repeat,repeating-linear-gradient(90deg,#3c3c3c 0 1.8px,transparent 1.8px 3px) bottom/100% 1px no-repeat,repeating-linear-gradient(180deg,#3c3c3c 0 1.8px,transparent 1.8px 3px) left/1px 100% no-repeat,repeating-linear-gradient(180deg,#3c3c3c 0 1.8px,transparent 1.8px 3px) right/1px 100% no-repeat;"></div>
<div class="a" style="left:194.2px;top:730.5px;width:37.5px;height:7px;background:repeating-linear-gradient(90deg,#3c3c3c 0 1.8px,transparent 1.8px 3px) top/100% 1px no-repeat,repeating-linear-gradient(90deg,#3c3c3c 0 1.8px,transparent 1.8px 3px) bottom/100% 1px no-repeat,repeating-linear-gradient(180deg,#3c3c3c 0 1.8px,transparent 1.8px 3px) left/1px 100% no-repeat,repeating-linear-gradient(180deg,#3c3c3c 0 1.8px,transparent 1.8px 3px) right/1px 100% no-repeat;"></div>
<div class="a" style="left:66px;top:808.2px;width:14px;height:1px;background:repeating-linear-gradient(90deg,#555 0 3px,transparent 3px 6px)"></div>
<div class="a" style="left:83.5px;top:763.7px;width:158px;height:89px;background:#fff;border:1px solid #d4d4d4"></div>
<div class="a" style="left:94.3px;top:768.2px;width:137.3px;height:19.2px;background:repeating-linear-gradient(90deg,#3c3c3c 0 1.8px,transparent 1.8px 3px) top/100% 1px no-repeat,repeating-linear-gradient(90deg,#3c3c3c 0 1.8px,transparent 1.8px 3px) bottom/100% 1px no-repeat,repeating-linear-gradient(180deg,#3c3c3c 0 1.8px,transparent 1.8px 3px) left/1px 100% no-repeat,repeating-linear-gradient(180deg,#3c3c3c 0 1.8px,transparent 1.8px 3px) right/1px 100% no-repeat;"></div>
<div class="t" style="left:95.8px;top:772.2px;font-family:'Liberation Serif',serif;font-size:8.6px;color:#555">Bấm để sửa kiểu tiêu đề Bản cái</div>
<div class="a" style="left:94.3px;top:845.4000000000001px;width:37.5px;height:7px;background:repeating-linear-gradient(90deg,#3c3c3c 0 1.8px,transparent 1.8px 3px) top/100% 1px no-repeat,repeating-linear-gradient(90deg,#3c3c3c 0 1.8px,transparent 1.8px 3px) bottom/100% 1px no-repeat,repeating-linear-gradient(180deg,#3c3c3c 0 1.8px,transparent 1.8px 3px) left/1px 100% no-repeat,repeating-linear-gradient(180deg,#3c3c3c 0 1.8px,transparent 1.8px 3px) right/1px 100% no-repeat;"></div>
<div class="a" style="left:136.2px;top:845.4000000000001px;width:53px;height:7px;background:repeating-linear-gradient(90deg,#3c3c3c 0 1.8px,transparent 1.8px 3px) top/100% 1px no-repeat,repeating-linear-gradient(90deg,#3c3c3c 0 1.8px,transparent 1.8px 3px) bottom/100% 1px no-repeat,repeating-linear-gradient(180deg,#3c3c3c 0 1.8px,transparent 1.8px 3px) left/1px 100% no-repeat,repeating-linear-gradient(180deg,#3c3c3c 0 1.8px,transparent 1.8px 3px) right/1px 100% no-repeat;"></div>
<div class="a" style="left:194.2px;top:845.4000000000001px;width:37.5px;height:7px;background:repeating-linear-gradient(90deg,#3c3c3c 0 1.8px,transparent 1.8px 3px) top/100% 1px no-repeat,repeating-linear-gradient(90deg,#3c3c3c 0 1.8px,transparent 1.8px 3px) bottom/100% 1px no-repeat,repeating-linear-gradient(180deg,#3c3c3c 0 1.8px,transparent 1.8px 3px) left/1px 100% no-repeat,repeating-linear-gradient(180deg,#3c3c3c 0 1.8px,transparent 1.8px 3px) right/1px 100% no-repeat;"></div>
<!-- /pane -->
<div class="a" style="left:267px;top:165px;width:18px;height:707px;background:#d9d9d9"></div>
<div class="a" style="left:267.3px;top:164.2px;width:18.4px;height:18.4px;background:#fff;border:1px solid #c4c4c4"></div>
<div class="a" style="left:271.9px;top:170.8px;width:0;height:0;border-left:4.6px solid transparent;border-right:4.6px solid transparent;border-bottom:5px solid #5f5f5f"></div>
<div class="a" style="left:290px;top:164px;width:1px;height:708px;background:#c8c8c8"></div>

<!-- slide -->
<div class="a" style="left:415px;top:175px;width:1200px;height:720px;background:#fff;border:1px solid #cfcfcf"></div>
<div class="a" style="left:586px;top:301px;width:1020px;height:268px;background:repeating-linear-gradient(90deg,#707070 0 1.8px,transparent 1.8px 3.0px) top/100% 1px no-repeat,repeating-linear-gradient(90deg,#707070 0 1.8px,transparent 1.8px 3.0px) bottom/100% 1px no-repeat,repeating-linear-gradient(180deg,#707070 0 1.8px,transparent 1.8px 3.0px) left/1px 100% no-repeat,repeating-linear-gradient(180deg,#707070 0 1.8px,transparent 1.8px 3.0px) right/1px 100% no-repeat"></div>
<div class="a" style="left:586px;top:577px;width:1020px;height:187px;background:repeating-linear-gradient(90deg,#707070 0 1.8px,transparent 1.8px 3.0px) top/100% 1px no-repeat,repeating-linear-gradient(90deg,#707070 0 1.8px,transparent 1.8px 3.0px) bottom/100% 1px no-repeat,repeating-linear-gradient(180deg,#707070 0 1.8px,transparent 1.8px 3.0px) left/1px 100% no-repeat,repeating-linear-gradient(180deg,#707070 0 1.8px,transparent 1.8px 3.0px) right/1px 100% no-repeat"></div>
<div class="t" style="left:586px;top:377px;width:1020px;text-align:center;font-family:'Liberation Serif',serif;font-size:85px;color:#000;line-height:91px;white-space:normal">Bấm để sửa kiểu tiêu đề Bản cái</div>
<div class="t" style="left:586px;top:581.4px;width:1020px;text-align:center;font-size:35px;letter-spacing:-0.47px;color:#000">Bấm để chỉnh sửa kiểu tiêu đề phụ của Bản cái</div>

<!-- ===== CONTEXT MENU ===== -->
<div class="a" style="left:199.8px;top:234px;width:243px;height:417px;background:#fff;border:1px solid #c9c9c9;border-radius:5px;box-shadow:1px 4px 12px rgba(0,0,0,0.07)"></div>
<div class="a" style="left:201px;top:272px;width:240px;height:36px;background:#d1d1d1"></div>
<div class="a" style="left:241px;top:390px;width:200px;height:1px;background:#e1e1e1"></div>
<div class="a" style="left:241px;top:573px;width:200px;height:1px;background:#e1e1e1"></div>
<div class="a" style="left:241px;top:612px;width:199px;height:1px;background:#e1e1e1"></div>
<style>.mi{font-size:14.5px;color:#262626}.md{color:#a8a8a8}.u{text-decoration:underline;text-underline-offset:2px;text-decoration-thickness:1px}</style>
<div class="t mi md" style="left:246px;top:246.5px;color:#b0b0b0">Cắt</div>
<div class="t mi" style="left:246px;top:283px"><span class="u">S</span>ao chép</div>
<div class="t mi" style="left:246.5px;top:321.8px;font-weight:bold;color:#1a1a1a">Tùy chọn Dán:</div>
<div class="t mi" style="left:246px;top:402.5px">Chè<span class="u">n</span> Bản cái Trang chiếu</div>
<div class="t mi" style="left:246px;top:438.8px">Ch<span class="u">è</span>n Bố trí</div>
<div class="t mi" style="left:246px;top:474.8px;letter-spacing:0.25px"><span class="u">N</span>hân bản Bố trí</div>
<div class="t mi md" style="left:246px;top:511px;letter-spacing:0.45px"><span class="u">X</span>óa bỏ Bố trí</div>
<div class="t mi" style="left:246px;top:546.7px;letter-spacing:0.45px">Đổ<span class="u">i</span> tên Bố trí</div>
<div class="t mi" style="left:246px;top:585.6px">Định <span class="u">d</span>ạng Nền...</div>
<div class="t mi md" style="left:246px;top:624px">Chú th<span class="u">í</span>ch Mới</div>

<svg class="a" style="left:205px;top:238px" width="240" height="410" viewBox="205 238 240 410">
  <!-- scissors -->
  <g fill="none" stroke="#b0b0b0" stroke-width="1.1">
    <path d="M220 243 L228.5 256 M230 243 L221.5 256"/>
    <circle cx="221.5" cy="258.5" r="2.6"/><circle cx="228.5" cy="258.5" r="2.6"/>
  </g>
  <!-- copy -->
  <path d="M224 282 V278.6 H215.6 V295.8 H222.6" fill="#fff" stroke="#3a3a3a" stroke-width="1.2"/>
  <path d="M222.8 282.6 H230.2 L234.6 287 V297.6 H222.8 Z" fill="#fff" stroke="#3a3a3a" stroke-width="1.2"/>
  <path d="M230.2 282.6 V287 H234.6" fill="none" stroke="#3a3a3a" stroke-width="1"/>
  <path d="M225.5 290.8 H232 M225.5 293.8 H232" stroke="#3a3a3a" stroke-width="1"/>
  <!-- paste header clipboard -->
  <path d="M221 316.5 H218.6 V332.2 H225" fill="none" stroke="#e8a13a" stroke-width="1.5"/>
  <path d="M229.5 316.5 H232.5 V321" fill="none" stroke="#e8a13a" stroke-width="1.5"/>
  <path d="M221.5 318.5 V316 H223 Q223.5 313.2 225.3 313.2 Q227.1 313.2 227.6 316 H229 V318.5" fill="none" stroke="#666" stroke-width="1.1"/>
  <rect x="226.6" y="322.6" width="8" height="10" fill="#fff" stroke="#333" stroke-width="1.2"/>
  <!-- paste icon 1 -->
  <path d="M254 358 H250.6 V376.6 H259" fill="none" stroke="#e8a13a" stroke-width="1.6"/>
  <path d="M262 358 H267 V363.5" fill="none" stroke="#e8a13a" stroke-width="1.6"/>
  <path d="M253.5 361.5 V358.5 H255.5 Q256 355.5 258.5 355.5 Q261 355.5 261.5 358.5 H263.5 V361.5 Z" fill="#fff" stroke="#777" stroke-width="1.1"/>
  <rect x="260.4" y="364" width="10.4" height="13.2" fill="#fff" stroke="#444" stroke-width="1.2"/>
  <!-- paste icon 2 (picture) -->
  <path d="M292.5 358 H289 V376.6 H295" fill="none" stroke="#e8a13a" stroke-width="1.6"/>
  <path d="M300.5 358 H305.5 V366" fill="none" stroke="#e8a13a" stroke-width="1.6"/>
  <path d="M292 361.5 V358.5 H294 Q294.5 355.5 297 355.5 Q299.5 355.5 300 358.5 H302 V361.5 Z" fill="#fff" stroke="#777" stroke-width="1.1"/>
  <rect x="294.6" y="366.8" width="14.4" height="10.6" fill="#fff" stroke="#333" stroke-width="1.2"/>
  <path d="M295.5 376.8 L300 372 L303 374.5 L305.5 371.5 L308.5 376.8 Z" fill="#2d7fd0"/>
  <!-- Chen Ban cai Trang chieu -->
  <path d="M215.8 413.8 V400 H232" fill="none" stroke="#555" stroke-width="1.4"/>
  <rect x="217.2" y="401.9" width="17.6" height="14.8" fill="#4d4d4d"/>
  <rect x="218.7" y="403.3" width="14.6" height="11.9" fill="#fff"/>
  <rect x="219.8" y="404.2" width="12.6" height="3.6" fill="#c5ecfb" stroke="#2b93d6" stroke-width="1.1"/>
  <rect x="219.8" y="409.4" width="12.6" height="4.3" fill="#c5ecfb" stroke="#2b93d6" stroke-width="1.1"/>
  <!-- Chen Bo tri -->
  <rect x="215.8" y="435.8" width="18.6" height="15.6" fill="#fafafa" stroke="#4d4d4d" stroke-width="1.3"/>
  <rect x="217.6" y="437.6" width="15" height="12" fill="none" stroke="#9a9a9a" stroke-width="0.9"/>
  <line x1="217.6" y1="440.5" x2="232.6" y2="440.5" stroke="#777" stroke-width="0.9"/>
  <line x1="224.8" y1="440.5" x2="224.8" y2="449.6" stroke="#666" stroke-width="1"/>
  <rect x="214" y="433" width="10" height="10" fill="#fff"/>
  <path d="M214.8 438.2 H223.8 M219.3 433.7 V442.7" stroke="#2a9d4c" stroke-width="1.3"/>
  <!-- Nhan ban -->
  <rect x="215.8" y="472" width="13.8" height="9.6" fill="#fafafa" stroke="#4d4d4d" stroke-width="1.3"/>
  <rect x="217.5" y="473.7" width="10.4" height="6.2" fill="none" stroke="#aaa" stroke-width="0.8"/>
  <rect x="220.5" y="477.8" width="12.8" height="10.5" fill="#fafafa" stroke="#4d4d4d" stroke-width="1.3"/>
  <rect x="222.2" y="479.5" width="9.4" height="7.1" fill="none" stroke="#999" stroke-width="0.9"/>
  <!-- Xoa bo -->
  <g fill="none" stroke="#b9b9b9" stroke-width="1.2">
    <rect x="215.8" y="507.8" width="18.4" height="14.4"/>
    <rect x="218" y="510" width="14" height="3.5"/>
    <line x1="218" y1="517" x2="228" y2="517"/>
  </g>
  <rect x="226.5" y="518" width="10" height="9" fill="#fff"/>
  <path d="M227.5 518.5 L234.5 525.5 M234.5 518.5 L227.5 525.5" stroke="#b9b9b9" stroke-width="1.1"/>
  <!-- Doi ten -->
  <rect x="215.9" y="543.8" width="13" height="15" fill="#f4f4f4" stroke="#4d4d4d" stroke-width="1.3"/>
  <rect x="217.6" y="545.5" width="9.6" height="11.6" fill="none" stroke="#9a9a9a" stroke-width="0.9"/>
  <rect x="226" y="543" width="4" height="17" fill="#fff"/>
  <path d="M231.5 545.5 H233.5 V557.5 H231.5" fill="none" stroke="#4d4d4d" stroke-width="1.2"/>
  <path d="M224.5 543.6 Q227.8 543.6 227.8 547 V556.5 Q227.8 560.6 224.5 560.6 M231 543.6 Q227.8 543.6 227.8 547 V556.5 Q227.8 560.6 231 560.6" fill="none" stroke="#2b93d6" stroke-width="1.2"/>
  <!-- Dinh dang nen -->
  <path d="M217.8 584.8 V581.6 H226.2 L232.4 587.8 V600.4 H217.8 V597.4" fill="#fff" stroke="#333" stroke-width="1.2"/>
  <path d="M226.2 581.6 V587.6 H232.4" fill="none" stroke="#333" stroke-width="1.1"/>
  <path d="M219 587.4 Q219 586.4 220.2 586.4 Q221.4 586.4 221.4 587.4 V591 L223.8 593.4 L219.8 597.4 L215.6 593.2 L219 589.8 Z" fill="#fff" stroke="#333" stroke-width="1.2" stroke-linejoin="round"/>
  <circle cx="223.5" cy="592" r="0.9" fill="#6aa8e0"/>
  <!-- Chu thich moi -->
  <g fill="none" stroke="#b9b9b9" stroke-width="1.3">
    <path d="M223 622 H233.3 V632.6 H223.5 L219.5 636.8 V632.6 H217 V627"/>
    <path d="M216.2 625 H223.5 M219.8 621.2 V628.8"/>
  </g>
</svg>

<!-- ===== ANNOTATION ===== -->
<div class="a" style="left:182.4px;top:259.5px;width:278.3px;height:62.9px;border:5.3px solid #e3161d"></div>
<svg class="a" style="left:0;top:0" width="1488" height="872">
  <line x1="146" y1="634" x2="307" y2="357" stroke="#e3161d" stroke-width="5.6"/>
  <path d="M317.2 341 L294.3 356.2 L315.9 368.3 Z" fill="#e3161d"/>
</svg>

</body></html>
